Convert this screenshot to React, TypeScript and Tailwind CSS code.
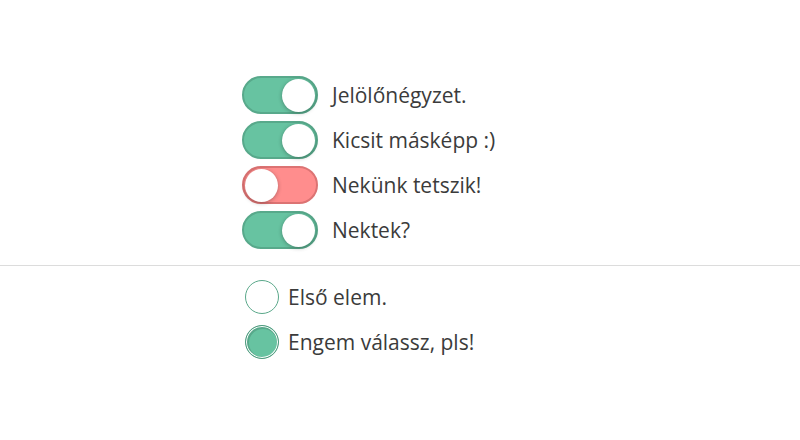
import { useState } from 'react';

type Toggle = { label: string; on: boolean };

const toggles: Toggle[] = [
  { label: 'Jelölőnégyzet.', on: true },
  { label: 'Kicsit másképp :)', on: true },
  { label: 'Nekünk tetszik!', on: false },
  { label: 'Nektek?', on: true },
];

const radios = ['Első elem.', 'Engem válassz, pls!'];

export default function App() {
  const [state, setState] = useState(toggles.map((t) => t.on));
  const [picked, setPicked] = useState(1);

  return (
    <div className="w-[800px] h-[440px] bg-white text-[#3b3b3b] font-['Open_Sans',sans-serif] overflow-hidden">
      <div className="pt-[76px] pl-[242px] flex flex-col gap-[7px]">
        {toggles.map((t, i) => (
          <label key={t.label} className="flex items-center gap-[14px] cursor-pointer" onClick={() => setState(state.map((v, j) => (j === i ? !v : v)))}>
            <span
              className={`relative w-[76px] h-[38px] rounded-full border-2 flex items-center px-[1px] ${
                state[i] ? 'bg-[#67c3a1] border-[#58a98b] justify-end' : 'bg-[#ff8d8d] border-[#dc7373] justify-start'
              }`}
            >
              <span className="w-[33px] h-[33px] rounded-full bg-white shadow-[0_1px_4px_rgba(0,0,0,0.3)]" />
            </span>
            <span className="text-[21px] leading-none">{t.label}</span>
          </label>
        ))}
      </div>

      <div className="mt-[16px] h-px bg-[#dcdcdc]" />

      <div className="pt-[14px] pl-[245px] flex flex-col gap-[11px]">
        {radios.map((r, i) => (
          <label key={r} className="flex items-center gap-[9px] cursor-pointer" onClick={() => setPicked(i)}>
            <span
              className={`w-[34px] h-[34px] rounded-full border ${
                picked === i
                  ? 'bg-[#67c3a1] border-[#4f9a7e] shadow-[inset_0_0_0_1px_#ffffff,inset_1px_1px_0_2px_#58a98b]'
                  : 'bg-white border-[#5aa88a]'
              }`}
            />
            <span className="text-[21px] leading-none">{r}</span>
          </label>
        ))}
      </div>
    </div>
  );
}
